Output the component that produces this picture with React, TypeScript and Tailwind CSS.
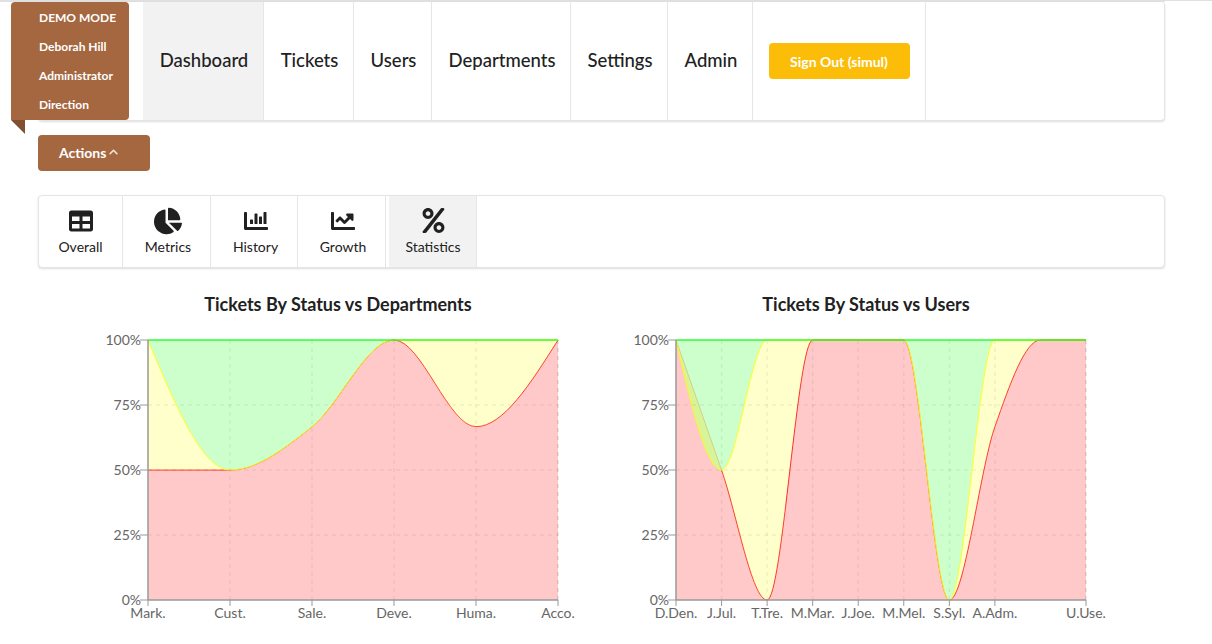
import React from "react";
import { FaTable, FaChartPie, FaChartBar, FaChartLine, FaPercent, FaChevronUp } from "react-icons/fa";

const PLOT_W = 410;
const PLOT_H = 260;
const LEFT = 74;
const TOP = 15;

const navItems = [
  { label: "Tickets", w: "w-[90px]" },
  { label: "Users", w: "w-[78px]" },
  { label: "Departments", w: "w-[139px]" },
  { label: "Settings", w: "w-[97px]" },
  { label: "Admin", w: "w-[85px]" },
];

const tabs = [
  { label: "Overall", icon: <FaTable className="w-[24px] h-[24px]" />, w: "w-[84px]" },
  { label: "Metrics", icon: <FaChartPie className="w-[28px] h-[28px]" />, w: "w-[88px] pl-[3px]" },
  { label: "History", icon: <FaChartBar className="w-[24px] h-[24px]" />, w: "w-[87px] pl-[3px]" },
  { label: "Growth", icon: <FaChartLine className="w-[24px] h-[24px]" />, w: "w-[88px] pl-[3px]" },
];

// d3 style monotoneX, returns the segment commands after the first point
function monotone(pts: [number, number][]) {
  const n = pts.length;
  const m: number[] = [];
  const d: number[] = [];
  for (let i = 0; i < n - 1; i++) d.push((pts[i + 1][1] - pts[i][1]) / (pts[i + 1][0] - pts[i][0]));
  for (let i = 1; i < n - 1; i++) {
    const h0 = pts[i][0] - pts[i - 1][0];
    const h1 = pts[i + 1][0] - pts[i][0];
    const p = (d[i - 1] * h1 + d[i] * h0) / (h0 + h1);
    const s = (Math.sign(d[i - 1]) + Math.sign(d[i])) * Math.min(Math.abs(d[i - 1]), Math.abs(d[i]), 0.5 * Math.abs(p)) || 0;
    m[i] = s;
  }
  m[0] = n > 1 ? (3 * d[0] - m[1]) / 2 : 0;
  m[n - 1] = (3 * d[n - 2] - m[n - 2]) / 2;
  let out = "";
  for (let i = 0; i < n - 1; i++) {
    const h = (pts[i + 1][0] - pts[i][0]) / 3;
    out += ` C${pts[i][0] + h},${pts[i][1] + m[i] * h} ${pts[i + 1][0] - h},${pts[i + 1][1] - m[i + 1] * h} ${pts[i + 1][0]},${pts[i + 1][1]}`;
  }
  return out;
}

function toPts(values: number[]): [number, number][] {
  const step = PLOT_W / (values.length - 1);
  return values.map((v, i) => [LEFT + i * step, TOP + PLOT_H - (v / 100) * PLOT_H]);
}

function line(values: number[]) {
  const p = toPts(values);
  return `M${p[0][0]},${p[0][1]}` + monotone(p);
}

function band(upper: number[], lower: number[]) {
  const u = toPts(upper);
  const l = toPts(lower).reverse();
  return `M${u[0][0]},${u[0][1]}` + monotone(u) + ` L${l[0][0]},${l[0][1]}` + monotone(l) + " Z";
}

function StackChart({ title, labels, red, yellow }: { title: string; labels: string[]; red: number[]; yellow: number[] }) {
  const green = red.map(() => 100);
  const zero = red.map(() => 0);
  const step = PLOT_W / (labels.length - 1);
  return (
    <div className="w-[528px]">
      <h3 className="text-center text-[18px] font-bold leading-[24px] text-[#212121]">{title}</h3>
      <svg width="528" height="310" className="block mt-[9px]" style={{ fontFamily: "Lato, sans-serif" }}>
        {/* red goes under the other two, its line only shows faintly where they cross */}
        <path d={band(red, zero)} fill="#ff0000" fillOpacity="0.21" />
        <path d={line(red)} fill="none" stroke="#ff0000" strokeOpacity="0.8" />
        <path d={band(green, yellow)} fill="#bcffbc" fillOpacity="0.75" />
        <path d={band(yellow, red)} fill="#ffff00" fillOpacity="0.2" />

        {[0, 25, 50, 75, 100].map((v) => {
          const y = TOP + PLOT_H - (v / 100) * PLOT_H;
          return (
            <g key={v}>
              {v > 0 && v < 100 && (
                <line x1={LEFT} x2={LEFT + PLOT_W} y1={y} y2={y} stroke="#000" strokeOpacity="0.06" strokeDasharray="4 4" strokeWidth="1.5" />
              )}
              <line x1={LEFT - 8} x2={LEFT} y1={y} y2={y} stroke="#999" />
              <text x={LEFT - 7} y={y + 5} textAnchor="end" fontSize="14" fill="#666">{v}%</text>
            </g>
          );
        })}

        {labels.map((l, i) => {
          if (!l) return null;
          const x = LEFT + i * step;
          return (
            <g key={i}>
              {i > 0 && (
                <line x1={x} x2={x} y1={TOP} y2={TOP + PLOT_H} stroke="#000" strokeOpacity={i === labels.length - 1 ? 0.12 : 0.06} strokeDasharray="4 4" strokeWidth="1.5" />
              )}
              <line x1={x} x2={x} y1={TOP + PLOT_H} y2={TOP + PLOT_H + 6} stroke="#999" />
              <text x={x} y={TOP + PLOT_H + 18} textAnchor="middle" fontSize="14" fill="#666">{l}</text>
            </g>
          );
        })}

        <path d={line(yellow)} fill="none" stroke="#ffff00" strokeOpacity="0.85" />
        <path d={line(green)} fill="none" stroke="#00ff00" strokeOpacity="0.6" strokeWidth="2" />

        <line x1={LEFT} x2={LEFT} y1={TOP} y2={TOP + PLOT_H} stroke="#999" strokeWidth="1.5" />
        <line x1={LEFT} x2={LEFT + PLOT_W} y1={TOP + PLOT_H} y2={TOP + PLOT_H} stroke="#999" strokeWidth="1.5" />
      </svg>
    </div>
  );
}

export default function App() {
  return (
    <div className="relative h-[644px] w-[1212px] overflow-hidden bg-white text-[#212121]" style={{ fontFamily: "Lato, sans-serif" }}>
      <div className="h-[1px] bg-[#e0e0e0]" />
      <div className="h-[1px] w-[1165px] bg-[#e0e0e0]" />

      {/* Main menu */}
      <div className="relative ml-[38px] flex h-[119px] w-[1127px] rounded-[4px] border border-[#e4e4e6] border-t-0 bg-white pl-[104px] shadow-[0_1px_2px_rgba(34,36,38,0.15)]">
        <div className="flex w-[121px] items-center justify-center border-r border-[#e6e6e7] bg-[#f2f2f2] pl-[2px] text-[18.5px] font-medium">Dashboard</div>
        {navItems.map((item) => (
          <div key={item.label} className={`flex ${item.w} items-center justify-center border-r border-[#e6e6e7] pl-[2px] text-[18.5px] font-medium`}>
            {item.label}
          </div>
        ))}
        <div className="flex w-[173px] items-center justify-center border-r border-[#e6e6e7]">
          <button className="h-[36px] w-[141px] rounded-[4px] bg-[#fbbd08] text-[14px] font-bold text-white">Sign Out (simul)</button>
        </div>

        {/* Ribbon */}
        <div className="absolute left-[-28px] top-0 flex h-[118px] w-[118px] flex-col justify-between rounded-[4px] rounded-bl-none bg-[#a5673f] pb-[8px] pl-[28px] pt-[9px] text-[12px] font-bold leading-[14px] text-white">
          <span>DEMO MODE</span>
          <span>Deborah Hill</span>
          <span>Administrator</span>
          <span>Direction</span>
          <span className="absolute left-0 top-full h-[14px] w-[14px] bg-[#805031] [clip-path:polygon(0_0,100%_0,100%_100%)]" />
        </div>
      </div>

      {/* Actions */}
      <button className="ml-[38px] mt-[14px] flex h-[36px] w-[112px] items-center gap-[2px] rounded-[4px] bg-[#a5673f] pb-[2px] pl-[21px] text-[14px] font-bold text-white">
        Actions <FaChevronUp className="h-[10px] w-[11px] opacity-80" />
      </button>

      {/* Tabs */}
      <div className="ml-[38px] mt-[24px] flex h-[73px] w-[1127px] rounded-[4px] border border-[#e4e4e6] bg-white shadow-[0_1px_2px_rgba(34,36,38,0.15)]">
        {tabs.map((t) => (
          <div key={t.label} className={`flex ${t.w} flex-col items-center justify-center border-r border-[#e6e6e7] pb-[2px] text-[14px]`}>
            <span className="flex h-[28px] items-center">{t.icon}</span>
            <span className="mt-[3px] leading-[17px]">{t.label}</span>
          </div>
        ))}
        <div className="ml-[3px] flex w-[88px] flex-col items-center justify-center border-r border-[#e6e6e7] bg-[#f2f2f2] pb-[2px] pl-[1px] text-[14px]">
          <span className="flex h-[28px] items-center"><FaPercent className="h-[25px] w-[25px]" /></span>
          <span className="mt-[3px] leading-[17px]">Statistics</span>
        </div>
      </div>

      {/* Charts */}
      <div className="mt-[24px] flex pl-[74px]">
        <StackChart
          title="Tickets By Status vs Departments"
          labels={["Mark.", "Cust.", "Sale.", "Deve.", "Huma.", "Acco."]}
          red={[50, 50, 66.67, 100, 66.67, 100]}
          yellow={[100, 50, 66.67, 100, 100, 100]}
        />
        <StackChart
          title="Tickets By Status vs Users"
          labels={["D.Den.", "J.Jul.", "T.Tre.", "M.Mar.", "J.Joe.", "M.Mel.", "S.Syl.", "A.Adm.", "", "U.Use."]}
          red={[100, 50, 0, 100, 100, 100, 0, 66.67, 100, 100]}
          yellow={[100, 50, 100, 100, 100, 100, 0, 100, 100, 100]}
        />
      </div>
    </div>
  );
}
